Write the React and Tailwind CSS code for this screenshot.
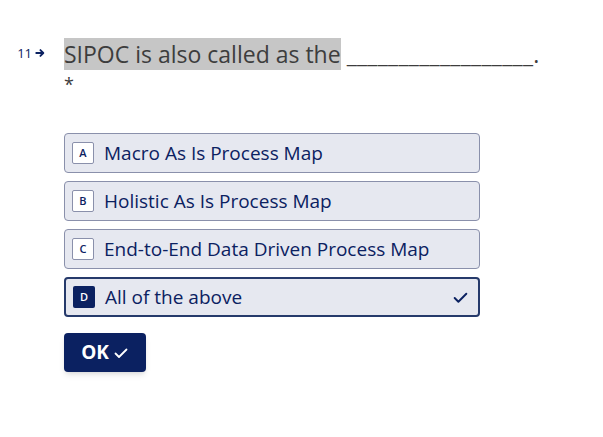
import React from 'react';

const options = [
    { key: 'A', label: 'Macro As Is Process Map' },
    { key: 'B', label: 'Holistic As Is Process Map' },
    { key: 'C', label: 'End-to-End Data Driven Process Map' },
    { key: 'D', label: 'All of the above', selected: true },
];

const Check = ({ className }) => (
    <svg viewBox="0 0 16 16" className={className} fill="none" stroke="currentColor" strokeWidth="1.8" strokeLinecap="round" strokeLinejoin="round">
        <path d="M2.5 8.5l3.5 3.5 7.5-7.5" />
    </svg>
);

export default function App() {
    return (
        <div className="w-[603px] h-[437px] bg-white relative" style={{ fontFamily: '"Open Sans", "Noto Sans", sans-serif' }}>
            <div className="flex items-start pt-[38px]">
                <div className="w-[64px] flex justify-end pr-[19px] pt-[5px]">
                    <span className="flex items-center gap-[3px] text-[13px] text-[#0b2161] leading-[20px]">
                        11
                        <svg viewBox="0 0 12 12" className="w-[10px] h-[10px]" fill="none" stroke="currentColor" strokeWidth="2.2" strokeLinecap="round" strokeLinejoin="round">
                            <path d="M1.5 6h8M6.5 2.5L10 6l-3.5 3.5" />
                        </svg>
                    </span>
                </div>
                <div className="flex-1">
                    <div className="text-[23px] leading-[32px] text-[#3d3d3d]">
                        <span className="bg-[#c6c6c6]">SIPOC is also called as the</span>{' '}
                        <span className="tracking-[0.3px]">__________________.</span>
                    </div>
                    <div className="text-[18px] leading-[20px] text-[#3d3d3d] mt-[4px]">*</div>

                    <div className="mt-[39px] w-[416px] flex flex-col gap-[8px]">
                        {options.map((o) => (
                            <div
                                key={o.key}
                                className={`h-[40px] rounded-[4px] bg-[#e6e8f0] flex items-center px-[7px] ${o.selected ? 'border-2 border-[#263a6b]' : 'border border-[#8a90ab]'}`}
                            >
                                <div
                                    className={`w-[22px] h-[22px] rounded-[2px] flex items-center justify-center text-[11px] font-semibold ${o.selected ? 'bg-[#0b2161] text-white' : 'bg-white border border-[#8a90ab] text-[#0b2161]'}`}
                                >
                                    {o.key}
                                </div>
                                <span className="ml-[10px] text-[19px] text-[#0b2161] leading-none">{o.label}</span>
                                {o.selected && <Check className="ml-auto mr-[2px] w-[17px] h-[17px] text-[#0b2161]" />}
                            </div>
                        ))}
                    </div>

                    <button className="mt-[16px] h-[39px] w-[82px] rounded-[4px] bg-[#0b2161] text-white flex items-center justify-center gap-[4px] shadow-md">
                        <span className="text-[19px] font-bold">OK</span>
                        <Check className="w-[16px] h-[16px]" />
                    </button>
                </div>
            </div>
        </div>
    );
}
